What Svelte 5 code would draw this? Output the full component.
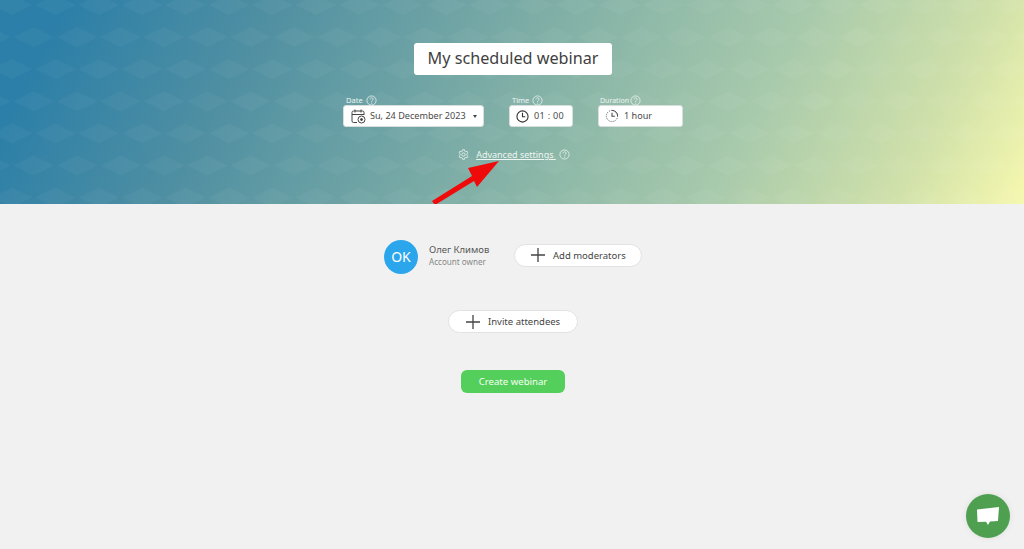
<script>
  const fields = [
    { label: 'Date', value: 'Su, 24 December 2023', icon: 'calendar', cls: 'date', caret: true },
    { label: 'Time', value: '01 : 00', icon: 'clock', cls: 'time' },
    { label: 'Duration', value: '1 hour', icon: 'timer', cls: 'duration' },
  ];
</script>

{#snippet help()}
  <svg class="help" width="11" height="11" viewBox="0 0 11 11" fill="none" stroke="currentColor">
    <circle cx="5.5" cy="5.5" r="4.6" stroke-width="0.8" />
    <path d="M4 4.3c0-2 3.1-2 3.1-.1 0 1.200-1.500 1.100-1.500 2.500" stroke-width="0.8" />
    <path d="M5.600 7.600v1" stroke-width="0.9" />
  </svg>
{/snippet}

{#snippet plus()}
  <svg width="14" height="14" viewBox="0 0 14 14" stroke="#444" stroke-width="1.300">
    <path d="M7 0v14M0 7h14" />
  </svg>
{/snippet}

<div class="page">
  <header class="hero">
    <svg class="pattern" width="100%" height="100%" aria-hidden="true">
      <defs>
        <pattern id="diamonds" width="43.4" height="64.2" patternUnits="userSpaceOnUse" x="12" y="5">
          <path d="M-20 0L0-10 20 0 0 10zM23.400 0L43.400-10 63.400 0 43.400 10zM-20 64.200L0 54.200 20 64.200 0 74.200zM23.400 64.200L43.400 54.200 63.400 64.200 43.400 74.200zM1.700 32.100L21.700 22.100 41.700 32.100 21.700 42.100z" fill="#fff" fill-opacity="0.035" />
        </pattern>
      </defs>
      <rect width="100%" height="100%" fill="url(#diamonds)" />
    </svg>

    <div class="hero-content">
      <div class="title">My scheduled webinar</div>

      <div class="fields">
        {#each fields as f}
          <div class="field">
            <div class="field-label {f.cls}-label"><span>{f.label}</span> {@render help()}</div>
            <div class="field-box {f.cls}">
              {#if f.icon === 'calendar'}
                <svg width="15" height="15" viewBox="0 0 15 15" fill="none" stroke="#444" stroke-width="1">
                  <path d="M6 13.500H2.500a1.500 1.500 0 0 1-1.500-1.500V3.500A1.500 1.500 0 0 1 2.500 2h9A1.500 1.500 0 0 1 13 3.500V6" />
                  <path d="M1 5.500h12M4 .5v3M10 .5v3" />
                  <circle cx="10.500" cy="10.500" r="3.500" />
                  <circle cx="10.500" cy="10.500" r="1" fill="#444" />
                </svg>
              {:else if f.icon === 'clock'}
                <svg width="13" height="13" viewBox="0 0 14 14" fill="none" stroke="#333" stroke-width="1.200">
                  <circle cx="7" cy="7" r="6" />
                  <path d="M7 3v4.300h3" />
                </svg>
              {:else}
                <svg width="14" height="14" viewBox="0 0 15 15" fill="none" stroke="#444">
                  <circle cx="7.500" cy="7.500" r="6" stroke-width="1" stroke-dasharray="1 1.200" />
                  <path d="M7.500 1.500a6 6 0 0 1 6 6" stroke-width="1" />
                  <path d="M7.500 4v3.800h3" stroke-width="1.100" />
                </svg>
              {/if}
              <span class="field-value">{f.value}</span>
              {#if f.caret}<span class="caret"></span>{/if}
            </div>
          </div>
        {/each}
      </div>

      <div class="advanced">
        <svg width="11" height="11" viewBox="0 0 12 12" fill="none" stroke="currentColor" stroke-width="0.900">
          <path d="M5 .8h2l.3 1.500 1.100.6 1.400-.5 1 1.700-1.100 1v1.800l1.100 1-1 1.700-1.400-.5-1.100.6L7 11.200H5l-.3-1.500-1.100-.6-1.400.5-1-1.700 1.100-1V5.100L1.200 4.100l1-1.700 1.400.5 1.100-.6z" />
          <circle cx="6" cy="6" r="1.800" />
        </svg>
        <a href="#advanced">Advanced settings&nbsp;</a>
        {@render help()}
      </div>
    </div>

    <svg class="arrow" width="72" height="47" viewBox="0 0 72 47" aria-hidden="true">
      <path d="M68 4L37 11 41 19 1 44 4 48 43 24 46 30z" fill="#f00b0b" />
    </svg>
  </header>

  <main class="content">
    <div class="people">
      <div class="avatar">OK</div>
      <div class="owner">
        <div class="owner-name">Олег Климов</div>
        <div class="owner-role">Account owner</div>
      </div>
      <button class="pill moderators">{@render plus()} Add moderators</button>
    </div>

    <button class="pill invite">{@render plus()} Invite attendees</button>

    <button class="create">Create webinar</button>
  </main>

  <button class="chat" aria-label="Chat">
    <svg width="24" height="21" viewBox="0 0 24 21">
      <path d="M1 3.500L23 1l-1 14-8 .6L12 19l-2-3.200L1.500 16z" fill="#fff" />
    </svg>
  </button>
</div>

<style>
  :global(body) {
    background: #f1f1f1;
  }
  .page {
    position: relative;
    height: 549px;
    overflow: hidden;
    font-family: "Noto Sans", sans-serif;
    color: #444;
  }
  .hero {
    position: relative;
    height: 204px;
    background: linear-gradient(118deg, #2c7fa8 6%, #4f8fa2 24%, #7dada6 48%, #a8caac 72%, #cfe0aa 88%, #f6f8ae 100%);
  }
  .pattern {
    position: absolute;
    inset: 0;
  }
  .hero-content {
    position: relative;
    display: flex;
    flex-direction: column;
    align-items: center;
    padding: 43px 0 0 2px;
  }
  .title {
    box-sizing: border-box;
    width: 198px;
    height: 32px;
    line-height: 31px;
    text-align: center;
    background: #fff;
    border-radius: 3px;
    font-size: 16.200px;
    color: #3f3f3f;
  }
  .fields {
    display: flex;
    gap: 25px;
    margin-top: 20px;
  }
  .field-label {
    display: flex;
    align-items: center;
    height: 10px;
    padding-left: 3px;
    font-size: 7.500px;
    color: #eef5f2;
  }
  .field-label span {
    width: 20px;
  }
  .time-label span {
    width: 20px;
  }
  .duration-label span {
    width: 30px;
    font-size: 7px;
  }
  .duration-label {
    padding-left: 2px;
  }
  .field-box {
    display: flex;
    align-items: center;
    box-sizing: border-box;
    height: 22px;
    padding-left: 7px;
    background: #fff;
    border: 1px solid #d8dedc;
    border-radius: 3px;
  }
  .date { width: 141px; }
  .time { width: 64px; padding-left: 6px; }
  .duration { width: 85px; padding-left: 6px; }
  .field-value {
    margin: 0 0 2px 5px;
    font-size: 9.100px;
    white-space: nowrap;
    color: #4a4a4a;
  }
  .date .field-value {
    margin-left: 4px;
  }
  .time .field-value {
    letter-spacing: 0.3px;
  }
  .caret {
    margin-left: 7px;
    border-left: 2.500px solid transparent;
    border-right: 2.500px solid transparent;
    border-top: 3px solid #444;
  }
  .advanced {
    display: flex;
    align-items: center;
    margin-top: 21px;
    padding-left: 2px;
    font-size: 9px;
    color: #eef5f0;
  }
  .advanced a {
    margin: 0 3px 0 7px;
    color: inherit;
    text-decoration: underline;
  }
  .arrow {
    position: absolute;
    left: 431px;
    top: 157px;
  }
  .content {
    display: flex;
    flex-direction: column;
    align-items: center;
    padding: 36px 0 0 2px;
  }
  .people {
    display: flex;
    align-items: center;
    height: 34px;
  }
  .avatar {
    width: 34px;
    height: 34px;
    line-height: 34px;
    text-align: center;
    border-radius: 50%;
    background: #2ba6ec;
    color: #fff;
    font-size: 14px;
  }
  .owner {
    margin-left: 11px;
    width: 85px;
    margin-top: -2px;
    line-height: 12px;
  }
  .owner-name {
    font-size: 9.500px;
    color: #555;
  }
  .owner-role {
    font-size: 8.100px;
    color: #888;
  }
  .pill {
    display: flex;
    align-items: center;
    box-sizing: border-box;
    height: 23px;
    padding: 0;
    background: #fff;
    border: 1px solid #e2e2e2;
    border-radius: 12px;
    font-family: inherit;
    font-size: 9.500px;
    color: #444;
  }
  .pill :global(svg) {
    margin-right: 8px;
  }
  .moderators {
    width: 128px;
    margin-top: -4px;
    padding-left: 16px;
  }
  .invite {
    width: 130px;
    margin-top: 36px;
    padding-left: 17px;
  }
  .create {
    width: 104px;
    height: 23px;
    margin-top: 37px;
    padding: 0;
    border: none;
    border-radius: 6px;
    background: #55cf5b;
    color: #f4fff4;
    font-family: inherit;
    font-size: 9.600px;
  }
  .chat {
    position: absolute;
    left: 966px;
    top: 494px;
    display: flex;
    align-items: center;
    justify-content: center;
    width: 44px;
    height: 44px;
    padding: 0;
    border: none;
    border-radius: 50%;
    background: #4e9f50;
    box-shadow: 0 0 6px rgba(0, 0, 0, 0.08);
  }
</style>
